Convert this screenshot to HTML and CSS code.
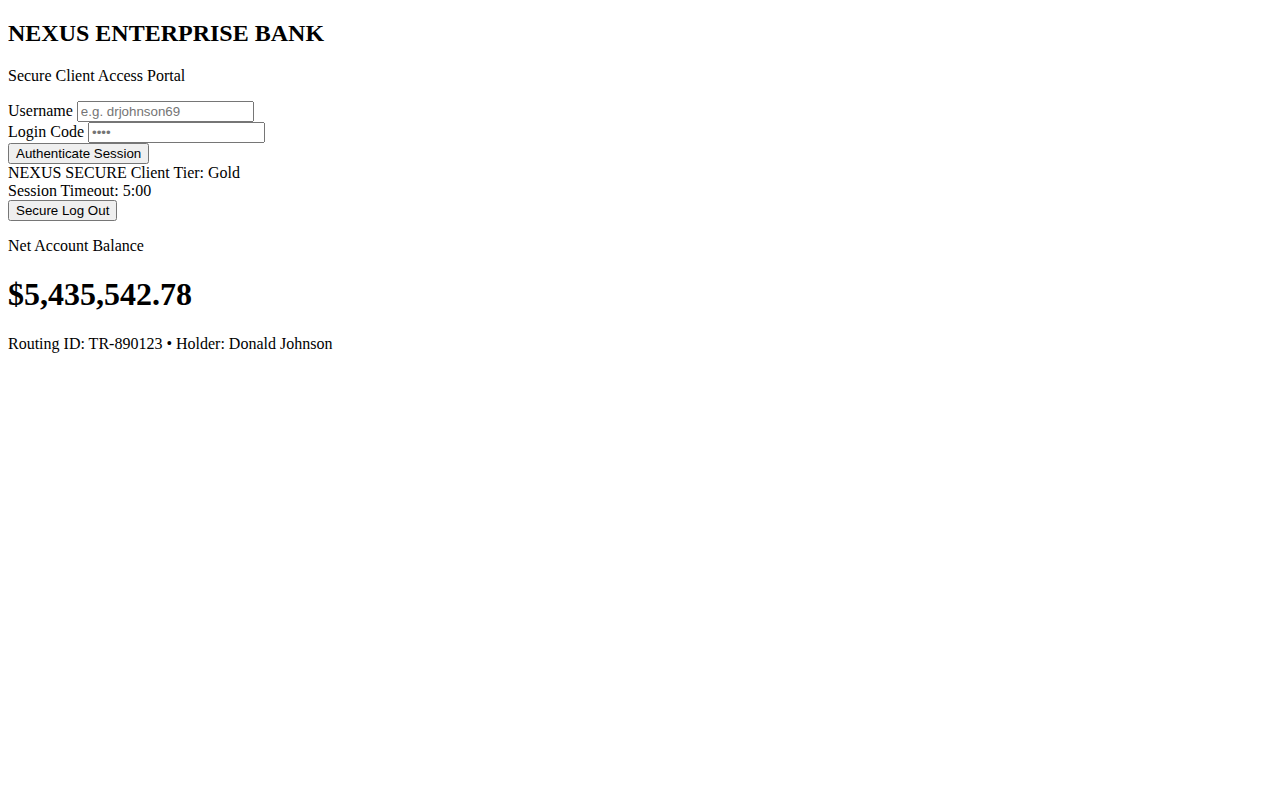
FILE: index.html
```html
<!DOCTYPE html>
<html>
<head>
<meta charset="utf-8">
<title>Nexus Enterprise Bank</title>
<link rel="stylesheet" href="styles.css">
</head>
<body class="page">
<h1 class="title">NEXUS ENTERPRISE BANK</h1>
<p class="subtitle">Secure Client Access Portal</p>
<form class="login">
<div class="row"><label for="u">Username</label> <input id="u" class="field" type="text" placeholder="e.g. drjohnson69"></div>
<div class="row"><label for="c">Login Code</label> <input id="c" class="field" type="password" placeholder="••••"></div>
<button type="button" class="btn">Authenticate Session</button>
</form>
<div class="session">
<div class="row"><span>NEXUS SECURE</span> <span>Client Tier: Gold</span></div>
<div class="row">Session Timeout: 5:00</div>
<button type="button" class="btn">Secure Log Out</button>
</div>
<p class="label">Net Account Balance</p>
<h1 class="balance">$5,435,542.78</h1>
<p class="meta">Routing ID: TR-890123 • Holder: Donald Johnson</p>
</body>
</html>
```
FILE: styles.css
```css
.page {
  font-family: "Liberation Serif", serif;
}
.title {
  font-size: 24px;
  margin: 11.92px 0 19.92px;
}
.login, .session {
  margin: 0;
}
.field, .btn {
  font-family: "Liberation Sans", Arial, sans-serif;
}
.field {
  box-sizing: border-box;
  width: 177px;
}
```
